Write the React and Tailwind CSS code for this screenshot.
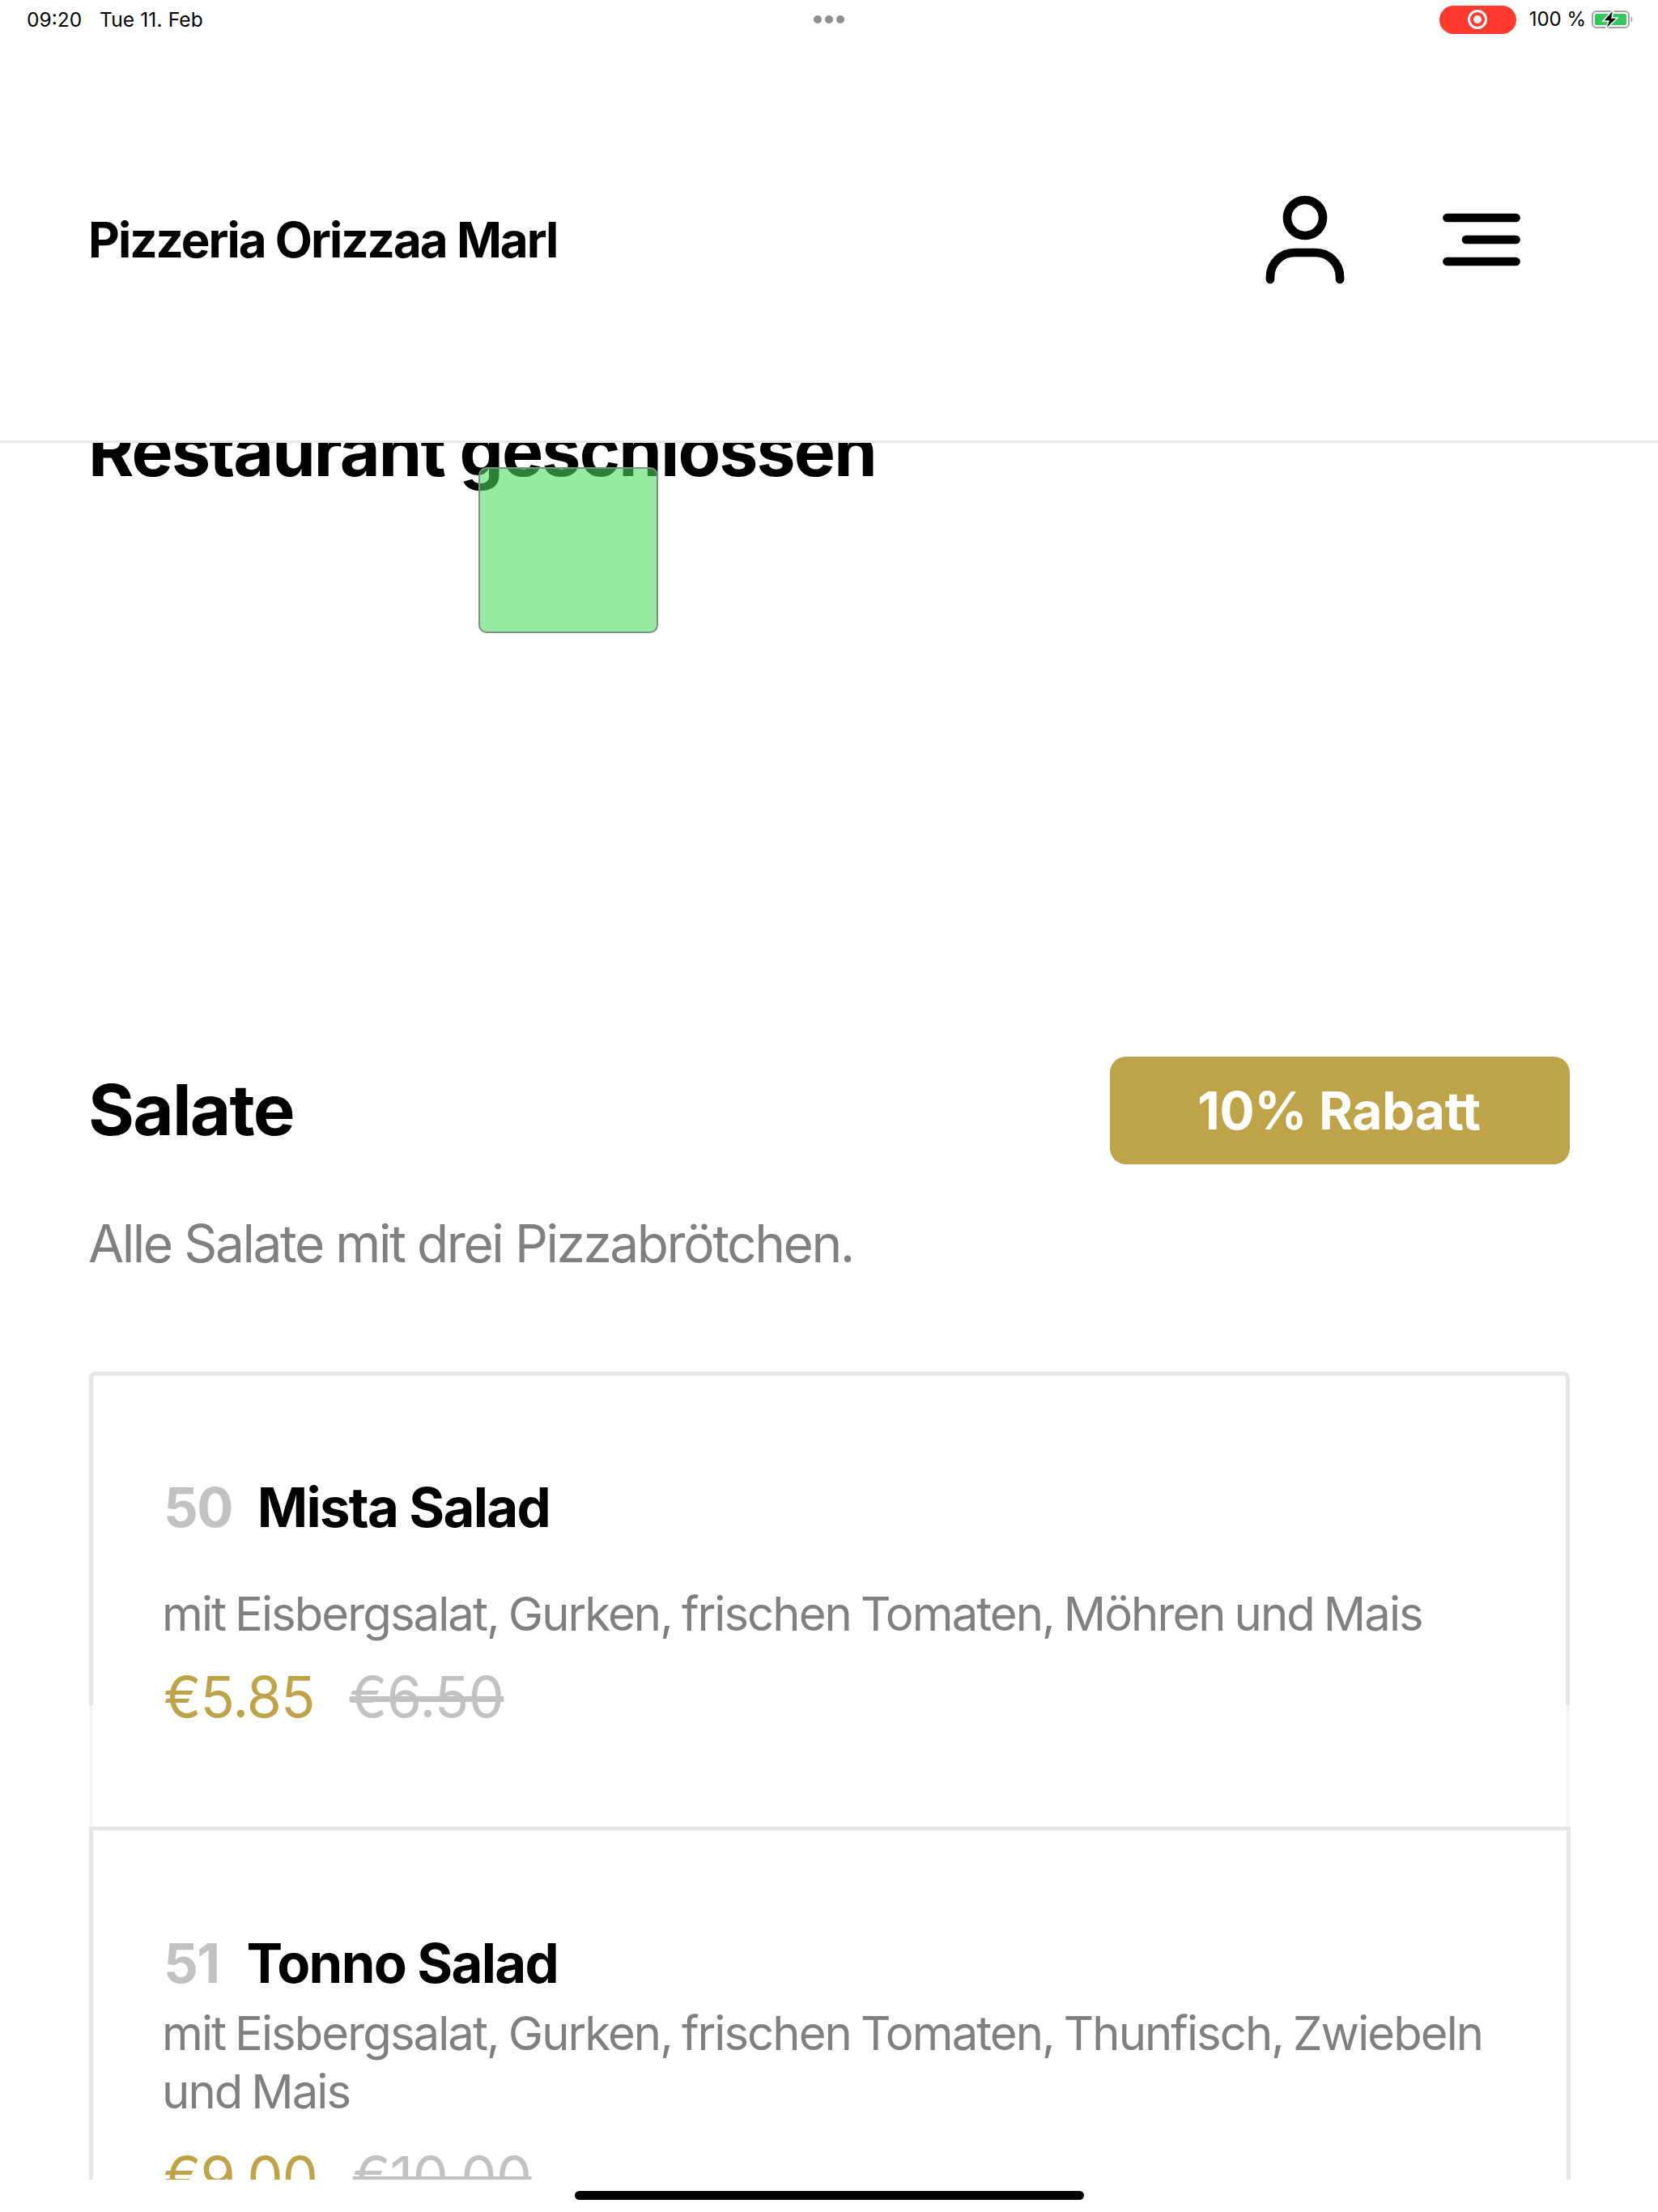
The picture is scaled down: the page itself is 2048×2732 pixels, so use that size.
export default function App() {
  return (
    <div className="relative w-[2048px] h-[2732px] overflow-hidden bg-white flex flex-col font-['Inter',sans-serif] text-black">
      <div className="h-[48px] shrink-0 grid grid-cols-3 items-center pl-[33px] pr-[29px]">
        <div className="flex items-center gap-[22px] text-[24.5px] leading-none">
          <span>09:20</span>
          <span className="tracking-[0.005em]">Tue 11. Feb</span>
        </div>
        <div className="flex gap-[4px] justify-center pr-[4px]">
          <span className="w-[10px] h-[10px] rounded-full bg-[#8e8e8e]"></span>
          <span className="w-[10px] h-[10px] rounded-full bg-[#8e8e8e]"></span>
          <span className="w-[10px] h-[10px] rounded-full bg-[#8e8e8e]"></span>
        </div>
        <div className="flex items-center justify-end">
          <div className="w-[95px] h-[35px] rounded-full bg-[#ff3b30] flex items-center justify-center">
            <span className="w-[24px] h-[24px] rounded-full border-[3px] border-white flex items-center justify-center">
              <span className="w-[10px] h-[10px] rounded-full bg-white"></span>
            </span>
          </div>
          <span className="ml-[16px] text-[24px] leading-none">100 %</span>
          <svg className="ml-[6px]" width="54" height="26" viewBox="0 0 54 26">
            <rect x="2" y="3" width="45" height="20" rx="5" fill="none" stroke="#a3a3a3" strokeWidth="2" />
            <rect x="5" y="6" width="39" height="14" rx="2.500" fill="#34c759" />
            <path d="M49.500 9.500c2.500 .7 2.500 6.300 0 7z" fill="#a3a3a3" />
            <path d="M28 0.500 L15 15 H22 L18 25.500 L33 11 H26 Z" fill="#000" stroke="#fff" strokeWidth="1.500" />
          </svg>
        </div>
      </div>

      <header className="h-[499px] shrink-0 border-b-[3px] border-[#e8e8e8] flex items-center pl-[109px] pr-[170px] relative z-20 bg-white">
        <h1 className="text-[60px] font-bold tracking-[-0.033em] leading-none">Pizzeria Orizzaa Marl</h1>
        <svg className="ml-auto" width="104" height="120" viewBox="0 0 104 120" fill="none" stroke="#000" strokeWidth="10.700" strokeLinecap="round">
          <circle cx="52" cy="33" r="22" />
          <path d="M9 109 V106 A30 30 0 0 1 39 76 H65 A30 30 0 0 1 95 106 V109" />
        </svg>
        <svg className="ml-[118px]" width="96" height="70" viewBox="0 0 96 70" fill="none" stroke="#000" strokeWidth="10.700" strokeLinecap="round">
          <path d="M5.500 8 H90.500 M29 35 H90.500 M5.500 62 H90.500" />
        </svg>
      </header>

      <main className="h-[2145px] flex-1 overflow-hidden pl-[109px] pr-[109px]">
        <h2 className="mt-[-34px] text-[86px] font-bold leading-[88px] tracking-[-0.022em]">Restaurant geschlossen</h2>
        <div className="mt-[704px] h-[133px] flex items-center justify-between">
          <h3 className="pb-[3px] text-[87px] font-bold leading-none tracking-[-0.02em]">Salate</h3>
          <div className="w-[568px] h-[133px] rounded-[20px] bg-[#bfa348] text-white text-[64px] font-bold tracking-[-0.005em] flex items-center justify-center pr-[2px]">10% Rabatt</div>
        </div>
        <p className="mt-[59px] text-[64px] leading-[78px] text-[#808080] tracking-[-0.038em]">Alle Salate mit drei Pizzabrötchen.</p>

        <article className="relative ml-[1px] mt-[119px] w-[1829px] h-[562px] border-[5px] border-b-0 border-[#e6e6e6] rounded-t-[8px] pl-[87px] pt-[123px]">
          <div className="absolute left-[-5px] right-[-5px] top-[407px] h-[150px] bg-white/60"></div>
          <div className="relative">
            <div className="flex items-baseline gap-[31px] text-[67px] font-bold leading-[80px] tracking-[-0.025em]">
              <span className="text-[#c2c2c2]">50</span>
              <span>Mista Salad</span>
            </div>
            <p className="ml-[-2px] mt-[55px] text-[58px] leading-[72px] text-[#808080] tracking-[-0.033em] [word-spacing:-2.5px]">mit Eisbergsalat, Gurken, frischen Tomaten, Möhren und Mais</p>
            <div className="mt-[25px] flex gap-[43px] text-[70px] leading-[84px]">
              <span className="text-[#bfa348] tracking-[-0.015em]">€5.85</span>
              <span className="text-[#c2c2c2] line-through tracking-[-0.008em]">€6.50</span>
            </div>
          </div>
        </article>

        <article className="ml-[1px] w-[1830px] h-[500px] border-[5px] border-b-0 border-[#e6e6e6] pl-[87px] pt-[124px]">
          <div className="flex items-baseline gap-[34px] text-[67px] font-bold leading-[80px] tracking-[-0.025em]">
            <span className="text-[#c2c2c2]">51</span>
            <span>Tonno Salad</span>
          </div>
          <p className="ml-[-2px] mt-[10px] text-[58px] leading-[72px] text-[#808080] tracking-[-0.033em] [word-spacing:-2.5px] w-[1660px]">mit Eisbergsalat, Gurken, frischen Tomaten, Thunfisch, Zwiebeln und Mais</p>
          <div className="mt-[28px] flex gap-[44px] text-[70px] leading-[84px]">
            <span className="text-[#bfa348] tracking-[-0.015em]">€9.00</span>
            <span className="text-[#c2c2c2] line-through tracking-[-0.008em]">€10.00</span>
          </div>
        </article>
      </main>

      <footer className="h-[40px] shrink-0 flex justify-center pt-[14px] bg-white relative z-20">
        <div className="w-[629px] h-[11px] rounded-full bg-black"></div>
      </footer>

      <div className="absolute z-30 left-[591px] top-[577px] w-[222px] h-[205px] rounded-[10px] border-[2px] border-[#7f9080] bg-[rgba(79,219,96,0.584)]"></div>
    </div>
  );
}
